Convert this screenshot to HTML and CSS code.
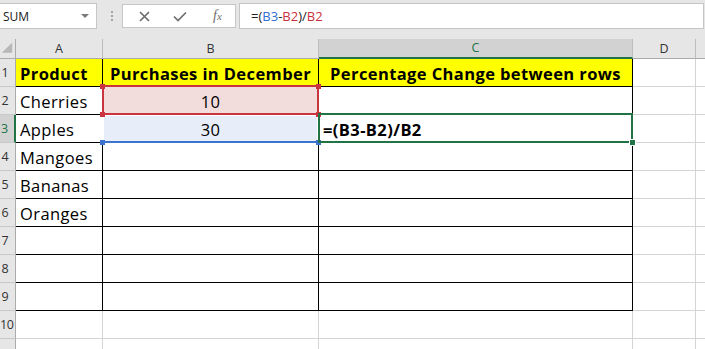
FILE: index.html
```html
<!DOCTYPE html>
<html lang="en">
<head>
    <meta charset="UTF-8">
    <meta name="viewport" content="width=device-width, initial-scale=1.0">
    <title>Percentage change</title>
    <link rel="stylesheet" href="styles.css">
</head>
<body>
    <!-- Formula bar -->
    <div class="formula-bar">
        <div class="name-box"><span class="name">SUM</span><span class="drop"></span></div>
        <div class="grip"><i></i><i></i><i></i></div>
        <div class="fx-buttons">
            <svg class="ico-x" width="11" height="11" viewBox="0 0 11 11"><path d="M1 1 L10 10 M10 1 L1 10" /></svg>
            <svg class="ico-ok" width="14" height="11" viewBox="0 0 14 11"><path d="M1 5.5 L5 9.5 L13 1.5" /></svg>
            <span class="fx"><i>f</i><span>x</span></span>
        </div>
        <div class="formula-input">=(<span class="t-blue">B3</span>-<span class="t-red">B2</span>)/<span class="t-red">B2</span></div>
    </div>

    <!-- Sheet -->
    <div class="sheet">
        <div class="c hd corner"><svg width="16" height="19" viewBox="0 0 16 19"><polygon points="13,3 13,14 2,14" /></svg></div>
        <div class="c hd ch">A</div>
        <div class="c hd ch">B</div>
        <div class="c hd ch sel-col">C</div>
        <div class="c hd ch">D</div>
        <div class="c hd ch last"></div>

        <div class="c hd rh">1</div>
        <div class="c k y">Product</div>
        <div class="c k y ctr">Purchases in December</div>
        <div class="c k y ctr">Percentage Change between rows</div>
        <div class="c"></div>
        <div class="c last"></div>

        <div class="c hd rh">2</div>
        <div class="c k">Cherries</div>
        <div class="c k ctr fill-red">10
            <div class="hl hl-red"><b class="h tl"></b><b class="h tr"></b><b class="h bl"></b><b class="h br"></b></div>
        </div>
        <div class="c k"></div>
        <div class="c"></div>
        <div class="c last"></div>

        <div class="c hd rh sel-row">3</div>
        <div class="c k">Apples</div>
        <div class="c k ctr fill-blue">30
            <div class="hl hl-blue"><b class="h bl"></b><b class="h br"></b></div>
        </div>
        <div class="c k bold">=(B3-B2)/B2
            <div class="hl hl-green"><b class="h br"></b></div>
        </div>
        <div class="c"></div>
        <div class="c last"></div>

        <div class="c hd rh">4</div>
        <div class="c k">Mangoes</div>
        <div class="c k"></div>
        <div class="c k"></div>
        <div class="c"></div>
        <div class="c last"></div>

        <div class="c hd rh">5</div>
        <div class="c k">Bananas</div>
        <div class="c k"></div>
        <div class="c k"></div>
        <div class="c"></div>
        <div class="c last"></div>

        <div class="c hd rh">6</div>
        <div class="c k">Oranges</div>
        <div class="c k"></div>
        <div class="c k"></div>
        <div class="c"></div>
        <div class="c last"></div>

        <div class="c hd rh">7</div>
        <div class="c k"></div>
        <div class="c k"></div>
        <div class="c k"></div>
        <div class="c"></div>
        <div class="c last"></div>

        <div class="c hd rh">8</div>
        <div class="c k"></div>
        <div class="c k"></div>
        <div class="c k"></div>
        <div class="c"></div>
        <div class="c last"></div>

        <div class="c hd rh">9</div>
        <div class="c k"></div>
        <div class="c k"></div>
        <div class="c k"></div>
        <div class="c"></div>
        <div class="c last"></div>

        <div class="c hd rh rh-two">10</div>
        <div class="c"></div>
        <div class="c"></div>
        <div class="c"></div>
        <div class="c"></div>
        <div class="c last"></div>

        <div class="c hd rh"></div>
        <div class="c"></div>
        <div class="c"></div>
        <div class="c"></div>
        <div class="c"></div>
        <div class="c last"></div>
    </div>
</body>
</html>
```

FILE: styles.css
```css
body {
    margin: 0;
    width: 705px;
    height: 349px;
    overflow: hidden;
    background-color: #ffffff;
    font-family: "Open Sans", "Noto Sans", sans-serif;
    color: #000;
}

/* formula bar */
.formula-bar {
    height: 39px;
    box-sizing: border-box;
    padding-top: 3px;
    background-color: #e6e6e6;
    display: flex;
    align-items: flex-start;
}
.name-box {
    width: 97px;
    height: 26px;
    box-sizing: border-box;
    background-color: #fff;
    border: 1px solid #c6c6c6;
    border-left: none;
    display: flex;
    align-items: center;
    padding: 0 7px 0 3px;
    font-size: 12px;
    color: #222;
}
.name {
    flex: 1;
}
.drop {
    width: 0;
    height: 0;
    border-left: 4px solid transparent;
    border-right: 4px solid transparent;
    border-top: 4px solid #7a7a7a;
}
.grip {
    margin: 8px 0 0 14px;
    display: flex;
    flex-direction: column;
    gap: 2px;
}
.grip i {
    display: block;
    width: 2px;
    height: 2px;
    background-color: #a3a3a3;
}
.fx-buttons {
    margin: 1px 0 0 9px;
    width: 114px;
    height: 24px;
    box-sizing: border-box;
    background-color: #fff;
    border: 1px solid #c6c6c6;
    display: flex;
    align-items: center;
}
.fx-buttons svg {
    fill: none;
    stroke: #6e6e6e;
    stroke-width: 1.7;
}
.ico-x {
    margin-left: 16px;
}
.ico-ok {
    margin-left: 23px;
}
.fx {
    margin-left: 26px;
    font-family: "Liberation Serif", serif;
    font-size: 14px;
    color: #6e6e6e;
    line-height: 14px;
}
.fx span {
    font-size: 11px;
    font-style: italic;
}
.formula-input {
    flex: 1;
    margin: 0 1px 0 3px;
    height: 26px;
    box-sizing: border-box;
    background-color: #fff;
    border: 1px solid #c6c6c6;
    padding-left: 11px;
    font-size: 13px;
    line-height: 24px;
    color: #222;
}
.t-blue {
    color: #2f6fd2;
}
.t-red {
    color: #cc2f3d;
}

/* sheet */
.sheet {
    height: 310px;
    overflow: hidden;
    display: grid;
    grid-template-columns: 16px 87px 216px 314px 63px 1fr;
    grid-template-rows: 20px;
    grid-auto-rows: 28px;
}
.c {
    position: relative;
    box-sizing: border-box;
    border-right: 1px solid #d4d4d4;
    border-bottom: 1px solid #d4d4d4;
    display: flex;
    align-items: flex-end;
    padding: 0 0 2px 4px;
    font-size: 16.5px;
    line-height: 20px;
    letter-spacing: 0.4px;
    white-space: nowrap;
}
.c.last {
    border-right: none;
}
.hd {
    background-color: #e6e6e6;
    border-right-color: #bdbdbd;
    border-bottom-color: #ababab;
    justify-content: center;
    align-items: center;
    padding: 0;
    font-size: 12.5px;
    letter-spacing: 0;
    color: #333;
}
.rh {
    border-right-color: #ababab;
    border-bottom-color: #c8c8c8;
    padding-right: 5px;
}
.rh-two {
    justify-content: flex-start;
    padding: 0;
    letter-spacing: -0.5px;
}
.corner {
    border-right-color: #ababab;
}
.corner svg {
    fill: #b7b7b7;
}
.sel-col {
    background-color: #d2d2d2;
    color: #217346;
    border-bottom: 2px solid #217346;
}
.sel-row {
    background-color: #d2d2d2;
    color: #217346;
    border-right: 2px solid #217346;
}
.k {
    border-right-color: #000;
    border-bottom-color: #000;
}
.y {
    background-color: #ffff00;
    font-weight: 700;
}
.bold {
    font-weight: 700;
}
.ctr {
    justify-content: center;
    padding-left: 0;
}
.fill-red {
    background-color: #f2dcdc;
}
.fill-blue {
    background-color: #e8eef9;
}

/* reference highlights */
.hl {
    position: absolute;
    left: -1px;
    top: -2px;
    right: -1px;
    bottom: -1px;
    border: 2px solid;
}
.hl-red {
    border-color: #c9343f;
    color: #c9343f;
    z-index: 3;
}
.hl-blue {
    top: -1px;
    border-color: #ffffff;
    border-bottom-color: #3b73cf;
    color: #3b73cf;
    z-index: 2;
}
.hl-green {
    border-color: #217346;
    color: #217346;
    z-index: 4;
}
.h {
    position: absolute;
    width: 5px;
    height: 5px;
    background-color: currentColor;
}
.tl { left: -4px; top: -3px; }
.tr { right: -4px; top: -3px; }
.bl { left: -4px; bottom: -4px; }
.br { right: -4px; bottom: -4px; }
.hl-green .br {
    width: 5px;
    height: 5px;
    border: 1px solid #fff;
    right: -5px;
    bottom: -5px;
}
```
